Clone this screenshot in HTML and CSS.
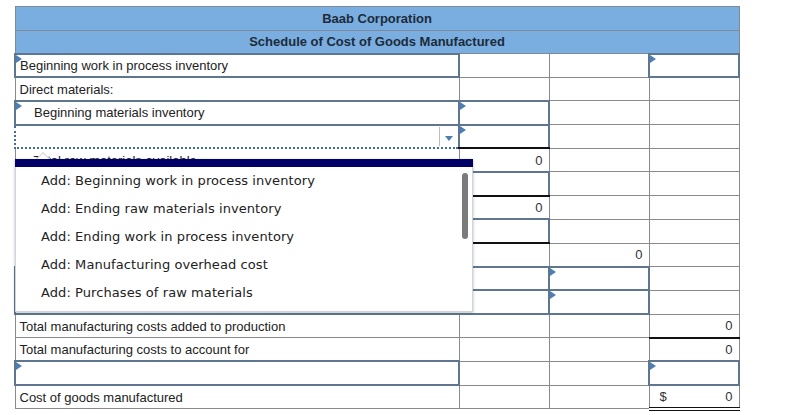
FILE: index.html
```html
<!DOCTYPE html>
<html lang="en">
<head>
  <meta charset="UTF-8" />
  <meta name="viewport" content="width=device-width, initial-scale=1.0"/>
  <title>Schedule of Cost of Goods Manufactured</title>
  <link rel="stylesheet" href="styles.css">
</head>
<body>
  <div class="sheet">
    <table class="schedule">
      <colgroup>
        <col class="col-label">
        <col class="col-a">
        <col class="col-b">
        <col class="col-c">
      </colgroup>
      <tr class="head"><th colspan="4">Baab Corporation</th></tr>
      <tr class="head"><th colspan="4">Schedule of Cost of Goods Manufactured</th></tr>
      <tr>
        <td class="entry"><span class="flag"></span>Beginning work in process inventory</td>
        <td></td><td></td>
        <td class="entry"><span class="flag"></span></td>
      </tr>
      <tr>
        <td>Direct materials:</td>
        <td></td><td></td><td></td>
      </tr>
      <tr>
        <td class="entry indent"><span class="flag"></span>Beginning materials inventory</td>
        <td class="entry"><span class="flag"></span></td>
        <td></td><td></td>
      </tr>
      <tr>
        <td class="select"><span class="select-btn"></span></td>
        <td class="entry rule"><span class="flag"></span></td>
        <td></td><td></td>
      </tr>
      <tr>
        <td class="indent">Total raw materials available</td>
        <td class="num">0</td>
        <td></td><td></td>
      </tr>
      <tr>
        <td></td>
        <td class="entry rule"></td>
        <td></td><td></td>
      </tr>
      <tr>
        <td></td>
        <td class="num">0</td>
        <td></td><td></td>
      </tr>
      <tr>
        <td></td>
        <td class="entry rule"></td>
        <td></td><td></td>
      </tr>
      <tr>
        <td></td>
        <td></td>
        <td class="num">0</td>
        <td></td>
      </tr>
      <tr>
        <td class="entry" colspan="2"></td>
        <td class="entry"><span class="flag"></span></td>
        <td></td>
      </tr>
      <tr>
        <td class="entry" colspan="2"></td>
        <td class="entry"><span class="flag"></span></td>
        <td></td>
      </tr>
      <tr>
        <td>Total manufacturing costs added to production</td>
        <td></td><td></td>
        <td class="num rule">0</td>
      </tr>
      <tr>
        <td>Total manufacturing costs to account for</td>
        <td></td><td></td>
        <td class="num">0</td>
      </tr>
      <tr>
        <td class="entry"><span class="flag"></span></td>
        <td></td><td></td>
        <td class="entry"><span class="flag"></span></td>
      </tr>
      <tr>
        <td>Cost of goods manufactured</td>
        <td></td><td></td>
        <td class="num total"><span class="cur">$</span>0</td>
      </tr>
    </table>

    <div class="picker">
      <span class="notch"></span>
      <div class="picker-bar"></div>
      <ul class="picker-list">
        <li>Add: Beginning work in process inventory</li>
        <li>Add: Ending raw materials inventory</li>
        <li>Add: Ending work in process inventory</li>
        <li>Add: Manufacturing overhead cost</li>
        <li>Add: Purchases of raw materials</li>
      </ul>
      <span class="scroll-thumb"></span>
    </div>
  </div>
</body>
</html>
```

FILE: styles.css
```css
body {
  margin: 0;
  background: #ffffff;
  font-family: "Liberation Sans", Arial, sans-serif;
  color: #222;
}

.sheet {
  position: relative;
  padding: 6px 0 0 14px;
}

.schedule {
  border-collapse: collapse;
  table-layout: fixed;
  width: 725px;
  font-size: 13px;
}

.col-label { width: 444px; }
.col-a { width: 90px; }
.col-b { width: 100px; }
.col-c { width: 90px; }

.schedule tr {
  height: 23.7px;
}

.schedule .head {
  height: 23.5px;
}

.schedule th,
.schedule td {
  border: 1px solid #8a8a8a;
  padding: 0 4px;
  line-height: 15px;
  position: relative;
  white-space: nowrap;
  overflow: visible;
}

.head th {
  background-color: #7aaee0;
  color: #1d2b3a;
  font-weight: bold;
  text-align: center;
  border-color: #7c8a99;
}

.schedule .entry {
  border: 2px solid #5e7690;
}

.flag {
  position: absolute;
  top: 0;
  left: 0;
  width: 0;
  height: 0;
  border-left: 6px solid #4e7eb5;
  border-top: 4px solid transparent;
  border-bottom: 4px solid transparent;
}

.indent {
  padding-left: 18px !important;
}

.num {
  text-align: right;
  padding-right: 6px !important;
  color: #333;
}

.schedule .rule {
  border-bottom: 2px solid #111;
}

.schedule .total {
  border-bottom: 4px double #111;
}

.cur {
  float: left;
  padding-left: 6px;
}

.schedule .select {
  border: 2px dotted #3e6fa3;
}

.select-btn {
  position: absolute;
  top: 1px;
  bottom: 1px;
  right: 0;
  width: 18px;
  border-left: 1px solid #b9bec4;
}

.select-btn::after {
  content: "";
  position: absolute;
  top: 9px;
  left: 5px;
  border-top: 5px solid #4e7eb0;
  border-left: 4px solid transparent;
  border-right: 4px solid transparent;
}

/* open dropdown list */
.picker {
  position: absolute;
  left: 15px;
  top: 159px;
  width: 458px;
  height: 153px;
  background: #ffffff;
  border: 1px solid #d0d4da;
  border-top: none;
  box-sizing: border-box;
  box-shadow: 0 1px 3px rgba(60, 70, 90, 0.35);
  font-family: "DejaVu Sans", Verdana, sans-serif;
  font-size: 13px;
  letter-spacing: 0.08px;
  color: #222;
}

.notch {
  position: absolute;
  left: 22px;
  top: -5px;
  width: 9px;
  height: 9px;
  background: #ffffff;
  border-top: 1px solid #cfd4da;
  border-left: 1px solid #cfd4da;
  transform: rotate(45deg);
}

.picker-bar {
  position: relative;
  height: 8px;
  margin: 0 -1px;
  background: #000066;
}

.picker-list {
  list-style: none;
  margin: 0;
  padding: 0;
}

.picker-list li {
  height: 28px;
  line-height: 28px;
  padding-left: 25px;
}

.scroll-thumb {
  position: absolute;
  right: 4px;
  top: 14px;
  width: 6px;
  height: 66px;
  border-radius: 3px;
  background: #7b7b7b;
}
```
